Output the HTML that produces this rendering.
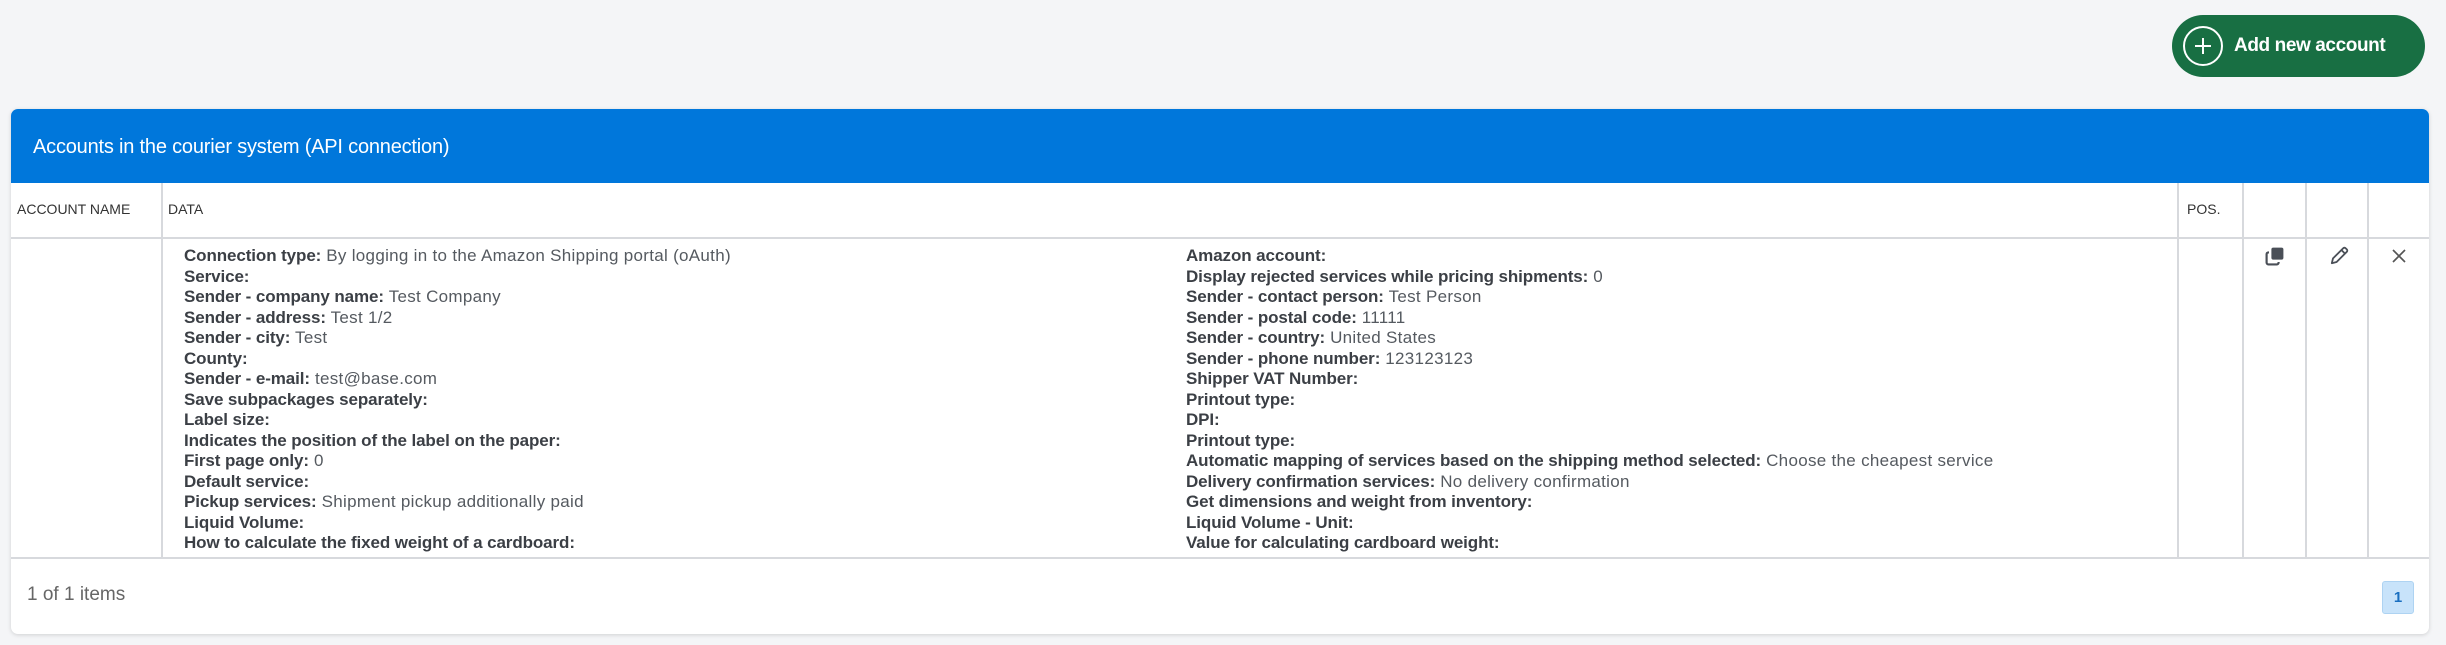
<!DOCTYPE html>
<html><head><meta charset="utf-8"><style>
*{margin:0;padding:0;box-sizing:border-box}
body{width:2446px;height:645px;background:#f4f5f7;font-family:"Liberation Sans",sans-serif;position:relative;overflow:hidden;color:#3b3f45}
.btn{position:absolute;left:2172px;top:15px;width:253px;height:62px;border-radius:31px;background:#186f43;color:#fff;font-weight:bold;font-size:19px;letter-spacing:-0.4px}
.btn .c{position:absolute;left:11px;top:11px;width:40px;height:40px;border:2px solid #fff;border-radius:50%}
.btn .c:before{content:"";position:absolute;left:10px;top:17px;width:16px;height:2px;background:#fff}
.btn .c:after{content:"";position:absolute;left:17px;top:10px;width:2px;height:16px;background:#fff}
.btn span{position:absolute;left:62px;top:20px}
.card{position:absolute;left:11px;top:109px;width:2418px;height:525px;background:#fff;border-radius:7px;box-shadow:0 1px 4px rgba(0,0,0,.15);overflow:hidden}
.head{height:74px;background:#0077db;color:#fff;font-size:20px;padding:27px 0 0 22px;letter-spacing:-0.2px}
.v{position:absolute;top:74px;height:376px;width:1.5px;background:#d7d9dd}
.h{position:absolute;left:0;width:100%;height:1.5px;background:#d7d9dd}
.th{position:absolute;top:92px;font-size:14px;color:#333}
.col{position:absolute;top:137px;font-size:17px;line-height:20.5px;letter-spacing:0.3px;color:#3b3f45}
.col b{font-weight:bold;color:#3b3f45;letter-spacing:-0.1px}
.col i{font-style:normal;color:#555a60}
.foot{position:absolute;left:16px;top:475px;font-size:19px;color:#666}
.pg{position:absolute;left:2371px;top:472px;width:32px;height:33px;background:#c8e3fa;border:1px solid #aed3f2;border-radius:3px;color:#1a6fc0;font-size:15px;font-weight:bold;text-align:center;line-height:31px}
.ic{position:absolute;top:135px}
</style></head><body>
<div class="btn"><div class="c"></div><span>Add new account</span></div>
<div class="card">
<div class="head">Accounts in the courier system (API connection)</div>
<div class="h" style="top:128px"></div>
<div class="h" style="top:448px"></div>
<div class="v" style="left:150px"></div>
<div class="v" style="left:2166px"></div>
<div class="v" style="left:2231px"></div>
<div class="v" style="left:2294px"></div>
<div class="v" style="left:2356px"></div>
<div class="th" style="left:6px">ACCOUNT NAME</div>
<div class="th" style="left:157px">DATA</div>
<div class="th" style="left:2176px">POS.</div>
<div class="col" style="left:173px">
<b>Connection type:</b> <i>By logging in to the Amazon Shipping portal (oAuth)</i><br>
<b>Service:</b><br>
<b>Sender - company name:</b> <i>Test Company</i><br>
<b>Sender - address:</b> <i>Test 1/2</i><br>
<b>Sender - city:</b> <i>Test</i><br>
<b>County:</b><br>
<b>Sender - e-mail:</b> <i>test@base.com</i><br>
<b>Save subpackages separately:</b><br>
<b>Label size:</b><br>
<b>Indicates the position of the label on the paper:</b><br>
<b>First page only:</b> <i>0</i><br>
<b>Default service:</b><br>
<b>Pickup services:</b> <i>Shipment pickup additionally paid</i><br>
<b>Liquid Volume:</b><br>
<b>How to calculate the fixed weight of a cardboard:</b>
</div>
<div class="col" style="left:1175px">
<b>Amazon account:</b><br>
<b>Display rejected services while pricing shipments:</b> <i>0</i><br>
<b>Sender - contact person:</b> <i>Test Person</i><br>
<b>Sender - postal code:</b> <i>11111</i><br>
<b>Sender - country:</b> <i>United States</i><br>
<b>Sender - phone number:</b> <i>123123123</i><br>
<b>Shipper VAT Number:</b><br>
<b>Printout type:</b><br>
<b>DPI:</b><br>
<b>Printout type:</b><br>
<b>Automatic mapping of services based on the shipping method selected:</b> <i>Choose the cheapest service</i><br>
<b>Delivery confirmation services:</b> <i>No delivery confirmation</i><br>
<b>Get dimensions and weight from inventory:</b><br>
<b>Liquid Volume - Unit:</b><br>
<b>Value for calculating cardboard weight:</b>
</div>
<svg class="ic" style="left:2252px" width="24" height="24" viewBox="0 0 20 20"><rect x="7" y="3" width="10" height="10" rx="1.5" fill="#4a4f57"/><path d="M5 7H4.5A1.5 1.5 0 0 0 3 8.5v7A1.5 1.5 0 0 0 4.5 17h7a1.5 1.5 0 0 0 1.5-1.5V15" fill="none" stroke="#4a4f57" stroke-width="1.8"/></svg>
<svg class="ic" style="left:2316px" width="24" height="24" viewBox="0 0 20 20"><path d="M4 16l1-4 8.5-8.5a1.4 1.4 0 0 1 2 0l1 1a1.4 1.4 0 0 1 0 2L8 15z" fill="none" stroke="#4a4f57" stroke-width="1.5" stroke-linejoin="round"/><path d="M12 5l3 3" stroke="#4a4f57" stroke-width="1.5"/></svg>
<svg class="ic" style="left:2376px" width="24" height="24" viewBox="0 0 20 20"><path d="M5 5l10 10M15 5L5 15" stroke="#555" stroke-width="1.4"/></svg>
<div class="foot">1 of 1 items</div>
<div class="pg">1</div>
</div>
</body></html>
